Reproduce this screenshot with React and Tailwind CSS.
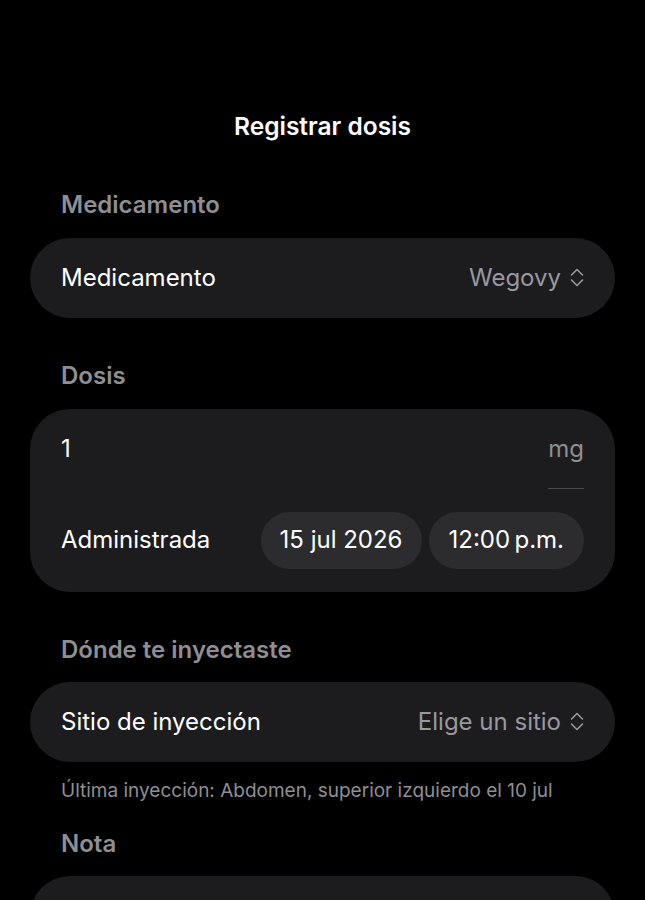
import React from 'react';

const Chevrons = () => (
    <svg width="14" height="21" viewBox="0 0 14 21" fill="none" stroke="currentColor" strokeWidth="1.6" strokeLinecap="round" strokeLinejoin="round">
        <path d="M1.5 8 L7 2.5 L12.5 8" />
        <path d="M1.5 13 L7 18.5 L12.5 13" />
    </svg>
);

const SectionTitle = ({ children }) => (
    <h2 className="px-[31px] text-[24px] font-semibold text-[#8e8e93] leading-none">{children}</h2>
);

const SelectRow = ({ label, value }) => (
    <div className="h-[80px] rounded-full bg-[#1c1c1e] flex items-center justify-between pl-[31px] pr-[31px]">
        <span className="text-[24px] text-white">{label}</span>
        <span className="flex items-center gap-[9px] text-[24px] text-[#98989f]">
            {value}
            <Chevrons />
        </span>
    </div>
);

const App = () => {
    return (
        <div
            className="w-[645px] h-[900px] overflow-hidden bg-black text-white"
            style={{ fontFamily: 'Inter, "Noto Sans", sans-serif' }}
        >
            <div className="pt-[114px] text-center text-[24.5px] font-semibold leading-none">
                Registrar dosis
            </div>

            <div className="px-[30px] mt-[54px]">
                <SectionTitle>Medicamento</SectionTitle>
                <div className="mt-[21px]">
                    <SelectRow label="Medicamento" value="Wegovy" />
                </div>

                <div className="mt-[46px]">
                    <SectionTitle>Dosis</SectionTitle>
                </div>
                <div className="mt-[21px] rounded-[40px] bg-[#1c1c1e] pl-[31px] pr-[31px] pt-[25px] pb-[23px]">
                    <div className="flex items-start justify-between">
                        <span className="text-[24px] leading-[30px] text-white">1</span>
                        <div className="w-[36px] flex flex-col items-end">
                            <span className="text-[24px] leading-[30px] text-[#8e8e93]">mg</span>
                            <div className="mt-[24px] w-[36px] h-px bg-[#48484a]" />
                        </div>
                    </div>
                    <div className="mt-[23px] flex items-center justify-between">
                        <span className="text-[24px] text-white">Administrada</span>
                        <div className="flex items-center gap-[7px]">
                            <span className="h-[57px] px-[19px] rounded-full bg-[#2c2c2e] flex items-center text-[24px] text-white">
                                15 jul 2026
                            </span>
                            <span className="h-[57px] px-[20px] rounded-full bg-[#2c2c2e] flex items-center text-[24px] text-white">
                                12:00&#8201;p.m.
                            </span>
                        </div>
                    </div>
                </div>

                <div className="mt-[46px]">
                    <SectionTitle>Dónde te inyectaste</SectionTitle>
                </div>
                <div className="mt-[20px]">
                    <SelectRow label="Sitio de inyección" value="Elige un sitio" />
                </div>
                <p className="mt-[19px] px-[31px] text-[19px] text-[#8e8e93] leading-none">
                    Última inyección: Abdomen, superior izquierdo el 10 jul
                </p>

                <div className="mt-[32px]">
                    <SectionTitle>Nota</SectionTitle>
                </div>
                <div className="mt-[20px] h-[120px] rounded-[40px] bg-[#1c1c1e]" />
            </div>
        </div>
    );
};

export default App;
